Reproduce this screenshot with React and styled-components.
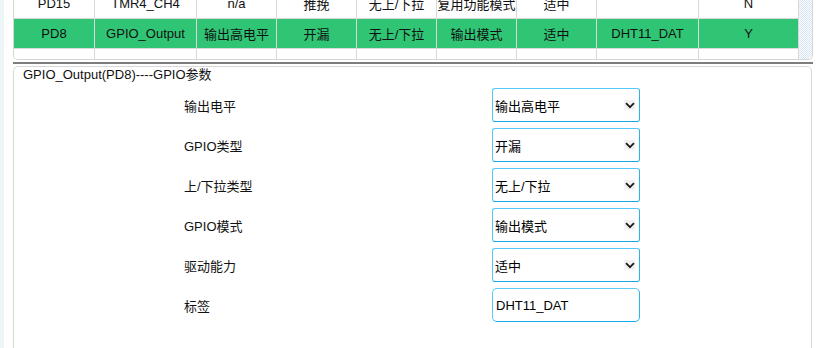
import React from "react";
import styled, { createGlobalStyle } from "styled-components";

const GlobalStyle = createGlobalStyle`
    html, body {
        margin: 0;
        padding: 0;
        background: #ffffff;
        overflow: hidden;
    }
    body {
        font-family: "Liberation Sans", "Noto Sans CJK SC", sans-serif;
        font-size: 13px;
        color: #000;
    }
`;

const columns = [81, 102, 80, 80, 80, 80, 80, 102, 100];

const pins = [
    { cells: ["PD15", "TMR4_CH4", "n/a", "推挽", "无上/下拉", "复用功能模式", "适中", "", "N"] },
    { cells: ["PD8", "GPIO_Output", "输出高电平", "开漏", "无上/下拉", "输出模式", "适中", "DHT11_DAT", "Y"], selected: true },
    { cells: ["", "", "", "", "", "", "", "", ""] },
];

const fields = [
    { label: "输出电平", value: "输出高电平", kind: "select" },
    { label: "GPIO类型", value: "开漏", kind: "select" },
    { label: "上/下拉类型", value: "无上/下拉", kind: "select" },
    { label: "GPIO模式", value: "输出模式", kind: "select" },
    { label: "驱动能力", value: "适中", kind: "select" },
    { label: "标签", value: "DHT11_DAT", kind: "input" },
];

export default function App() {
    return (
        <>
            <GlobalStyle />
            <Page>
                <SideStrip />
                <Main>
                    <TableBox>
                        <TableScroll>
                            <Table>
                                {pins.map((pin, i) => (
                                    <Row key={i} $selected={pin.selected}>
                                        {pin.cells.map((c, j) => (
                                            <Cell key={j}>{c}</Cell>
                                        ))}
                                    </Row>
                                ))}
                            </Table>
                        </TableScroll>
                        <ScrollTrack />
                    </TableBox>
                    <Splitter />
                    <Panel>
                        <PanelTitle>GPIO_Output(PD8)----GPIO参数</PanelTitle>
                        <Form>
                            {fields.map((f) => (
                                <React.Fragment key={f.label}>
                                    <Label>{f.label}</Label>
                                    {f.kind === "select" ? (
                                        <Select>
                                            <span>{f.value}</span>
                                            <Chevron>
                                                <svg width="10" height="7" viewBox="0 0 10 7">
                                                    <path d="M1 1.2 L5 5.2 L9 1.2" fill="none" stroke="#1c1c1c" strokeWidth="1.8" />
                                                </svg>
                                            </Chevron>
                                        </Select>
                                    ) : (
                                        <TextInput>{f.value}</TextInput>
                                    )}
                                </React.Fragment>
                            ))}
                        </Form>
                    </Panel>
                </Main>
            </Page>
        </>
    );
}

const Page = styled.div`
    display: flex;
    height: 348px;
    overflow: hidden;
`;

const SideStrip = styled.div`
    width: 4px;
    flex: none;
    background: #eef5f7;
`;

const Main = styled.div`
    flex: 1;
    padding: 0 7px 0 9px;
    display: flex;
    flex-direction: column;
    min-width: 0;
`;

const TableBox = styled.div`
    display: flex;
    height: 59px;
    border: 1px solid #d6d6d6;
    border-top: none;
    border-radius: 0 0 5px 5px;
    overflow: hidden;
    flex: none;
`;

const TableScroll = styled.div`
    width: 785px;
    overflow: hidden;
`;

const Table = styled.div`
    margin-top: -11px;
    display: flex;
    flex-direction: column;
`;

const Row = styled.div`
    display: grid;
    grid-template-columns: ${columns.map((w) => w + "px").join(" ")};
    height: 30px;
    flex: none;
    background: ${(p) => (p.$selected ? "#2fc575" : "#ffffff")};
`;

const Cell = styled.div`
    box-sizing: border-box;
    border-right: 1px solid #d9d9d9;
    border-bottom: 1px solid #d9d9d9;
    display: flex;
    align-items: center;
    justify-content: center;
    white-space: nowrap;
    font-size: 13px;
    color: #111;
`;

const ScrollTrack = styled.div`
    flex: 1;
    background: repeating-conic-gradient(#d3e5f4 0 25%, #ffffff 0 50%) 0 0 / 2px 2px;
`;

const Splitter = styled.div`
    height: 2px;
    margin-top: 2px;
    background: #7d7d7d;
    flex: none;
`;

const Panel = styled.div`
    margin-top: 2px;
    margin-right: 1px;
    height: 320px;
    border: 1px solid #d9d9d9;
    border-radius: 5px 5px 0 0;
    flex: none;
`;

const PanelTitle = styled.div`
    padding-left: 9px;
    line-height: 16px;
    font-size: 13px;
    color: #111;
`;

const Form = styled.div`
    display: grid;
    grid-template-columns: 308px 148px;
    grid-auto-rows: 34px;
    row-gap: 6px;
    padding-left: 170px;
    margin-top: 5px;
`;

const Label = styled.div`
    display: flex;
    align-items: center;
    font-size: 13px;
    color: #111;
`;

const Select = styled.div`
    box-sizing: border-box;
    display: flex;
    align-items: center;
    justify-content: space-between;
    padding: 0 4px 0 2px;
    border: 1px solid #52c9f8;
    border-bottom-color: #18a6e4;
    border-right-color: #2bb3ec;
    border-radius: 3px;
    font-size: 13px;
    color: #000;
`;

const Chevron = styled.span`
    display: flex;
    align-items: center;
    justify-content: center;
    width: 11px;
    height: 10px;
    background: #f3f3f3;
`;

const TextInput = styled.div`
    box-sizing: border-box;
    display: flex;
    align-items: center;
    padding-left: 3px;
    border: 1px solid #5acdf9;
    border-bottom-color: #16a8e8;
    border-right-color: #2ab5ee;
    border-radius: 5px;
    font-size: 13px;
    color: #000;
`;
